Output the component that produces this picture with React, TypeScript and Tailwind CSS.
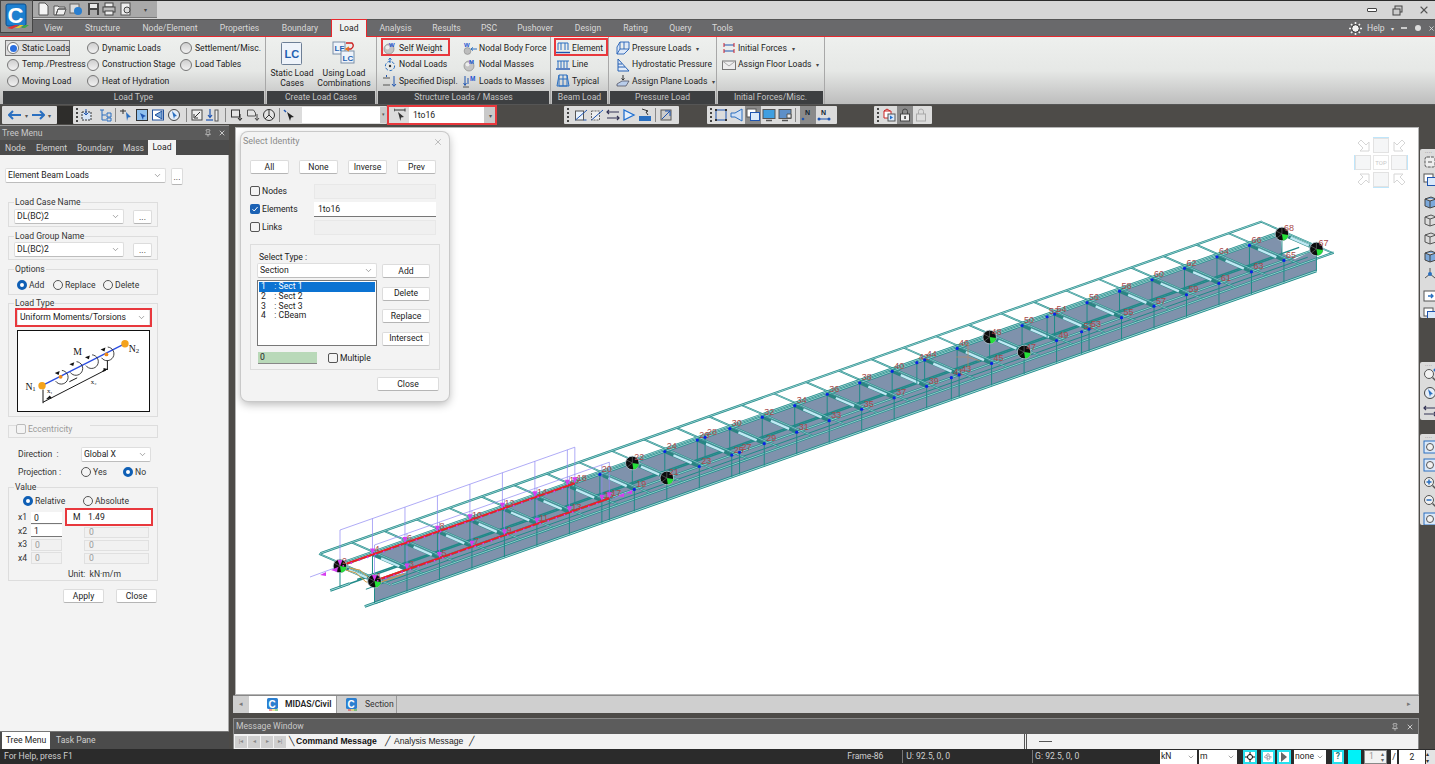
import type { ReactNode } from 'react';
import { ChevronDown, Pin, X } from 'lucide-react';

const TEAL = '#1f8a88';
const BLUE = '#2a6fc0';

// ---------- small widgets ----------

function Radio({ on = false }: { on?: boolean }) {
  return (
    <span
      className={
        on
          ? 'inline-block w-[10px] h-[10px] rounded-full border-[3px] border-[#0f5fb5] bg-white shrink-0'
          : 'inline-block w-[10px] h-[10px] rounded-full border border-[#555] bg-[#f4f4f4] shrink-0'
      }
    />
  );
}

function Check({ on = false, dim = false }: { on?: boolean; dim?: boolean }) {
  if (on) {
    return (
      <span className="inline-flex items-center justify-center w-[10px] h-[10px] rounded-[2px] bg-[#1c62b4] shrink-0">
        <svg width="8" height="8" viewBox="0 0 8 8">
          <path d="M1.5 4.2 3.2 6 6.6 2" fill="none" stroke="#fff" strokeWidth="1" />
        </svg>
      </span>
    );
  }
  return (
    <span
      className={
        dim
          ? 'inline-block w-[10px] h-[10px] rounded-[2px] border border-[#bbb] bg-[#f4f4f4] shrink-0'
          : 'inline-block w-[10px] h-[10px] rounded-[2px] border border-[#555] bg-[#f4f4f4] shrink-0'
      }
    />
  );
}

function Btn({ children, className }: { children: ReactNode; className: string }) {
  return (
    <div
      className={
        'flex items-center justify-center bg-white rounded-[2px] border border-[#dcdcdc] border-b-[#b5b5b5] text-[#222] ' +
        className
      }
    >
      {children}
    </div>
  );
}

function Select({ value, className }: { value: string; className: string }) {
  return (
    <div
      className={
        'flex items-center justify-between bg-white rounded-[2px] border border-[#dedede] border-b-[#bdbdbd] pl-[2px] pr-[3px] text-[#222] ' +
        className
      }
    >
      <span className="truncate">{value}</span>
      <ChevronDown size={9} color="#666" strokeWidth={1.5} />
    </div>
  );
}

function Group({
  legend,
  className,
  children,
}: {
  legend?: ReactNode;
  className: string;
  children?: ReactNode;
}) {
  return (
    <div className={'relative border border-[#dddddd] ' + className}>
      {legend && (
        <span className="absolute left-[5px] top-[-6px] px-px bg-[#f3f3f3] leading-[11px] text-[#333]">{legend}</span>
      )}
      {children}
    </div>
  );
}

// ---------- ribbon ----------

const Sphere = ({ letter }: { letter: string }) => (
  <svg width="14" height="14" viewBox="0 0 14 14" className="shrink-0">
    <circle cx="6" cy="8" r="5" fill="#c4c4c4" stroke="#8a8a8a" strokeWidth=".7" />
    <circle cx="4.5" cy="6.5" r="2" fill="#ececec" />
    <text x="6" y="6" fontSize="6" fontWeight="700" fill="#1f55d0" fontFamily="Liberation Sans">
      {letter}
    </text>
  </svg>
);

const ribbonIcons: Record<string, ReactNode> = {
  self: <Sphere letter="W" />,
  masses: <Sphere letter="M" />,
  nodal: (
    <svg width="14" height="14" viewBox="0 0 14 14" className="shrink-0">
      <circle cx="7" cy="8" r="4.6" fill="none" stroke={BLUE} strokeWidth="1" strokeDasharray="3 1.6" />
      <circle cx="7" cy="8" r="1.2" fill="#333" />
      <path d="M7 0v5M5.5 1.6 7 0l1.5 1.6" stroke={BLUE} strokeWidth="1" fill="none" />
    </svg>
  ),
  displ: (
    <svg width="14" height="14" viewBox="0 0 14 14" className="shrink-0">
      <path d="M0 4h7M0 11h7" stroke="#555" strokeWidth="1.2" />
      <path d="M3.5 1v2M11 2v10M9 10l2 2.4L13 10" stroke="#1f55b0" strokeWidth="1" fill="none" />
    </svg>
  ),
  body: (
    <svg width="14" height="14" viewBox="0 0 14 14" className="shrink-0">
      <circle cx="4.5" cy="10" r="3.4" fill="#bdbdbd" stroke="#888" strokeWidth=".6" />
      <text x="1" y="5.5" fontSize="6" fontWeight="700" fill="#1f55d0" fontFamily="Liberation Sans">
        W
      </text>
      <path d="M8 8h6M10 6.4 8 8l2 1.6" stroke={BLUE} strokeWidth="1" fill="none" />
    </svg>
  ),
  toMass: (
    <svg width="14" height="14" viewBox="0 0 14 14" className="shrink-0">
      <path d="M2 2v9M.6 9 2 11.5 3.4 9M5 4v6" stroke="#1f55b0" strokeWidth="1" fill="none" />
      <path d="M0 13h6" stroke="#555" />
      <text x="7" y="7" fontSize="6.5" fontWeight="700" fill="#1f55d0" fontFamily="Liberation Sans">
        M
      </text>
    </svg>
  ),
  element: (
    <svg width="14" height="14" viewBox="0 0 14 14" className="shrink-0">
      <path d="M2 9V2h10v7M5 2v7M9 2v7" stroke={BLUE} fill="none" />
      <path d="M0 11.5h14" stroke="#1f55b0" strokeWidth="1.4" />
    </svg>
  ),
  line: (
    <svg width="14" height="14" viewBox="0 0 14 14" className="shrink-0">
      <path d="M1 3h12M2 3v7M5 3v7M8 3v7M11 3v7" stroke={BLUE} fill="none" />
      <path d="M0 11h14" stroke="#1f55b0" strokeWidth="1.4" />
    </svg>
  ),
  typical: (
    <svg width="14" height="14" viewBox="0 0 14 14" className="shrink-0">
      <path d="M3 1h8v11H3zM1 12h12M3 5h8M7 1v11M3 1 1 12M11 1l2 11" stroke={BLUE} fill="none" />
    </svg>
  ),
  pressure: (
    <svg width="14" height="14" viewBox="0 0 14 14" className="shrink-0">
      <path d="M4 1h9v7L8 13H1V6zM4 1v7h9M4 8l-3 5M8 1v7" stroke="#2560b4" fill="#dde8f7" strokeWidth=".9" />
    </svg>
  ),
  hydro: (
    <svg width="14" height="14" viewBox="0 0 14 14" className="shrink-0">
      <path d="M2 1v12h11zM2 6h4M2 9h7" stroke="#2560b4" fill="#e3ecf8" />
    </svg>
  ),
  plane: (
    <svg width="14" height="14" viewBox="0 0 14 14" className="shrink-0">
      <path d="M1 10 6 7h7l-3 5H1z" fill="#b9cdea" stroke="#445" strokeWidth=".7" />
      <path d="M7 1v5M5.5 4.4 7 6l1.5-1.6" stroke="#333" fill="none" />
    </svg>
  ),
  forces: (
    <svg width="14" height="14" viewBox="0 0 14 14" className="shrink-0">
      <path d="M2 4h10M2 10h10" stroke="#1f55b0" strokeWidth="1.2" />
      <path d="M2 2v4M12 2v4M2 8v4M12 8v4" stroke="#c23" strokeWidth="1" />
    </svg>
  ),
  floor: (
    <svg width="14" height="14" viewBox="0 0 14 14" className="shrink-0">
      <rect x=".5" y="3" width="13" height="8.5" fill="#ededed" stroke="#777" />
      <path d="M.5 3 7 8l6.5-5" stroke="#aaa" fill="none" />
    </svg>
  ),
};

function RItem({
  icon,
  label,
  red,
  drop,
  className,
}: {
  icon: string;
  label: string;
  red?: boolean;
  drop?: boolean;
  className?: string;
}) {
  return (
    <div className={'relative flex items-center h-[16.5px] gap-[2px] text-[#222] whitespace-nowrap ' + (className ?? '')}>
      {red && <span className="absolute left-[-2px] right-[0px] top-[-2px] bottom-[1px] border-2 border-[#e8383d]" />}
      {ribbonIcons[icon]}
      <span>{label}</span>
      {drop && <span className="ml-[3px] text-[6px] text-[#444]">▾</span>}
    </div>
  );
}

function RRadio({ label, on }: { label: string; on?: boolean }) {
  return (
    <div className="relative flex items-center h-[16.5px] gap-[3px] text-[#222] whitespace-nowrap">
      {on && <span className="absolute left-[-2px] top-[0px] w-[65px] h-[16px] border border-[#777] bg-[#dedede]" />}
      <span
        className={
          on
            ? 'relative flex items-center justify-center w-[12px] h-[12px] rounded-full border border-[#777] bg-white shrink-0'
            : 'relative w-[12px] h-[12px] rounded-full border border-[#777] bg-gradient-to-b from-[#cfcfcf] to-[#f2f2f2] shrink-0'
        }
      >
        {on && <span className="w-[7px] h-[7px] rounded-full bg-[#2b6fe0]" />}
      </span>
      <span className="relative">{label}</span>
    </div>
  );
}

function Panel({ title, className, children }: { title: string; className: string; children: ReactNode }) {
  return (
    <div className={'flex flex-col shrink-0 border-r border-[#a8a8a8] ' + className}>
      <div className="h-[54px] pt-[3px]">{children}</div>
      <div className="h-[13px] mx-[1px] bg-[#3d3f41] text-[#c6c6c6] text-center leading-[13px]">{title}</div>
    </div>
  );
}

function LcIcon({ double }: { double?: boolean }) {
  if (double) {
    return (
      <svg width="24" height="24" viewBox="0 0 24 24">
        <rect x="1" y="2" width="12" height="12" fill="#eef3fa" stroke="#7b8fa8" />
        <rect x="9" y="11" width="13" height="12" fill="#eef3fa" stroke="#7b8fa8" />
        <text x="2.5" y="11" fontSize="8" fontWeight="700" fill="#1f5fb0" fontFamily="Liberation Sans">
          LF
        </text>
        <text x="10.5" y="20.5" fontSize="8" fontWeight="700" fill="#1f5fb0" fontFamily="Liberation Sans">
          LC
        </text>
        <path d="M14 3h6q3 3-1 6h-5" fill="none" stroke="#c22" strokeWidth="1.4" />
        <path d="M17 7l-3 2 3 2" fill="none" stroke="#e8791f" strokeWidth="1.4" />
      </svg>
    );
  }
  return (
    <svg width="22" height="24" viewBox="0 0 22 24">
      <rect x=".5" y=".5" width="20" height="22" rx="1" fill="#eef3fa" stroke="#6d7f96" />
      <text x="3.5" y="15.5" fontSize="11" fontWeight="700" fill="#1f5fb0" fontFamily="Liberation Sans">
        LC
      </text>
    </svg>
  );
}

// ---------- toolbar ----------

const Grip = () => (
  <span className="flex flex-col gap-[2px] w-[5px] shrink-0 items-center">
    <span className="w-[2px] h-[2px] bg-[#444]" />
    <span className="w-[2px] h-[2px] bg-[#444]" />
    <span className="w-[2px] h-[2px] bg-[#444]" />
    <span className="w-[2px] h-[2px] bg-[#444]" />
  </span>
);

const Sep = () => <span className="w-px h-[14px] bg-[#888] mx-[2px] shrink-0" />;

const toolIcons: Record<string, ReactNode> = {
  dash: (
    <>
      <rect x="2" y="4" width="9" height="8" fill="#d8e6f8" stroke="#333" strokeDasharray="2 1" />
      <path d="M6 1v6M4 5l2 2 2-2" stroke="#1f55b0" fill="none" />
    </>
  ),
  tree: <path d="M2 2h4M4 2v10h4M4 7h4M9 5h4v4H9zM9 10h4v3H9z" stroke={BLUE} fill="none" />,
  star: (
    <>
      <path d="M1 3h6M4 1v5" stroke="#333" />
      <path d="M7 4 12 9l-3 .5L8 13z" fill="#2a6fc0" />
    </>
  ),
  blue: (
    <>
      <rect x="1.5" y="1.5" width="11" height="11" fill="#8fc0ee" stroke="#333" />
      <path d="M5 5l6 3-2.5 1L8 12z" fill="#1f55b0" />
    </>
  ),
  sq: (
    <>
      <rect x="1.5" y="2" width="11" height="10" fill="#fff" stroke="#1f4f9a" />
      <path d="M11 3 4 7l7 4z" fill="#7ba8da" stroke="#1f4f9a" />
    </>
  ),
  circ: (
    <>
      <circle cx="7" cy="7" r="5.5" fill="#e6eef8" stroke="#444" />
      <path d="M5 3l5 5-2.3.4L7 11z" fill={BLUE} />
    </>
  ),
  arrowSq: (
    <>
      <rect x="2" y="2" width="10" height="10" fill="#eee" stroke="#444" />
      <path d="M10 4 5 9M4 6v4h4" stroke="#333" fill="none" />
    </>
  ),
  downBar: (
    <>
      <path d="M4 1v8M2 7l2 2.5L6 7" stroke="#1f55b0" fill="none" strokeWidth="1.2" />
      <path d="M0 12h7" stroke="#1f55b0" strokeWidth="1.2" />
      <rect x="9" y="2" width="3" height="11" fill="#eee" stroke="#555" />
    </>
  ),
  sqDown: (
    <>
      <rect x="1.5" y="2" width="8" height="7" fill="#e4e4e4" stroke="#333" />
      <path d="M10 6v6M8 10l2 2.5 2-2.5" stroke="#222" fill="none" />
    </>
  ),
  sqDown2: (
    <>
      <path d="M1.5 2h6l2 3v3h-8z" fill="#e4e4e4" stroke="#555" />
      <path d="M11 6v6M9 10l2 2.5 2-2.5" stroke="#444" fill="none" />
    </>
  ),
  wheel: (
    <>
      <circle cx="7" cy="7" r="5.5" fill="#e4e4e4" stroke="#333" />
      <path d="M7 7V1.5M7 7l4 4M7 7l-4 4" stroke="#333" />
    </>
  ),
  cursor: (
    <>
      <path d="M1 2l2 2" stroke="#1f55b0" strokeWidth="1.5" />
      <path d="M4 4l7 5-3 .5L7 13z" fill="#222" />
    </>
  ),
  frame1: (
    <>
      <rect x="1.5" y="3" width="8" height="9" fill="#eaf2fb" stroke="#555" />
      <path d="M1.5 12 13 2M9.5 12h3" stroke="#1f55b0" />
    </>
  ),
  frame2: (
    <>
      <rect x="1.5" y="3" width="8" height="9" fill="#eee" stroke="#666" strokeDasharray="2 1" />
      <path d="M1.5 12 13 2" stroke="#1f55b0" />
    </>
  ),
  lines: <path d="M1 4h12M1 10h12M3 2 1 4l2 2M11 8l2 2-2 2" stroke="#335" fill="none" strokeWidth="1.2" />,
  tri: <path d="M2 2v10l10-5z" fill="#e5f0fb" stroke="#1f6fd0" strokeWidth="1.3" />,
  nodesBlue: (
    <>
      <path d="M1 8h12v5H1z" fill="#2a6fc0" />
      <path d="M4 1l6 2-2 1 2 3" stroke="#333" fill="none" />
    </>
  ),
  swap: (
    <>
      <rect x="2" y="2" width="10" height="10" fill="#ccc" stroke="#555" />
      <path d="M3 11 11 3M6 3h5v5" stroke="#1f55b0" fill="none" />
    </>
  ),
  dots: (
    <>
      <rect x="2" y="2" width="10" height="10" fill="none" stroke="#1f55b0" />
      <path d="M1 1h2v2H1zM11 1h2v2h-2zM1 11h2v2H1zM11 11h2v2h-2z" fill="#333" />
    </>
  ),
  cone: <path d="M12 1v12L5 9H1V5h4z" fill="#cfe0f5" stroke={BLUE} />,
  win: (
    <>
      <rect x="1" y="1" width="9" height="8" fill="#fff" stroke="#555" />
      <rect x="4.5" y="4.5" width="9" height="8" fill="#dbe9f9" stroke="#1f55b0" />
    </>
  ),
  mon: (
    <>
      <rect x="1" y="1.5" width="12" height="9" fill="#3f9fe0" stroke="#555" />
      <path d="M4 12.5h6" stroke="#555" strokeWidth="1.5" />
    </>
  ),
  mon2: (
    <>
      <rect x="1" y="1.5" width="12" height="9" fill="#5d8fc8" stroke="#555" />
      <path d="M4 12.5h6" stroke="#555" strokeWidth="1.5" />
      <path d="M9 6h4v4H9z" fill="#eee" stroke="#555" />
    </>
  ),
  n1: (
    <>
      <text x="4" y="7" fontSize="7" fontWeight="700" fill="#123" fontFamily="Liberation Sans">
        N
      </text>
      <circle cx="2" cy="11" r="1.3" fill="#1f55b0" />
    </>
  ),
  n2: (
    <>
      <text x="4" y="7" fontSize="7" fontWeight="700" fill="#123" fontFamily="Liberation Sans">
        N
      </text>
      <path d="M2 11h10" stroke="#1f55b0" />
      <circle cx="2" cy="11" r="1.5" fill="#1f55b0" />
      <circle cx="12" cy="11" r="1.5" fill="#1f55b0" />
    </>
  ),
  pdf: (
    <>
      <path d="M2 3h7v7H2z" fill="#fff" stroke="#c22" />
      <path d="M2 3l3-2 3 2" stroke="#c22" fill="none" />
      <rect x="6" y="6" width="7" height="7" fill="#dbe9f9" stroke="#555" />
      <path d="M8 7.5 11 9.5 8 11.5z" fill="#1f6fd0" />
    </>
  ),
  lock: (
    <>
      <path d="M4.5 6V3.5a2.5 2.5 0 0 1 5 0V6" stroke="#444" fill="none" />
      <rect x="2.5" y="6" width="9" height="7" fill="#eee" stroke="#444" />
      <rect x="6.3" y="8" width="1.5" height="3" fill="#333" />
    </>
  ),
  lock2: (
    <>
      <path d="M4.5 6V3.5a2.5 2.5 0 0 1 5 0V6" stroke="#aaa" fill="none" />
      <rect x="2.5" y="6" width="9" height="7" fill="#ddd" stroke="#aaa" />
    </>
  ),
  mag: (
    <>
      <circle cx="6" cy="6" r="4.5" fill="#f2f2f2" stroke="#555" />
      <path d="M9.5 9.5 13 13" stroke="#555" strokeWidth="1.5" />
      <circle cx="12" cy="2" r="1.5" fill={BLUE} />
    </>
  ),
  magBox: (
    <>
      <rect x="1" y="1" width="12" height="12" fill="#dbe9f9" stroke={BLUE} />
      <circle cx="7" cy="7" r="3.5" fill="#f2f2f2" stroke="#555" />
    </>
  ),
  magPlus: (
    <>
      <circle cx="6" cy="6" r="4.5" fill="#f2f2f2" stroke="#555" />
      <path d="M3.5 6h5M6 3.5v5" stroke={BLUE} strokeWidth="1.5" />
      <path d="M9.5 9.5 13 13" stroke="#555" strokeWidth="1.5" />
    </>
  ),
  magMinus: (
    <>
      <circle cx="6" cy="6" r="4.5" fill="#f2f2f2" stroke="#555" />
      <path d="M3.5 6h5" stroke={BLUE} strokeWidth="1.5" />
      <path d="M9.5 9.5 13 13" stroke="#555" strokeWidth="1.5" />
    </>
  ),
  cube: <path d="M2 4l6-2 5 2v7l-6 2-5-2zM2 4l5 2 6-2M7 6v7" fill="#7ba8da" stroke="#444" />,
  cubeO: <path d="M2 4l6-2 5 2v7l-6 2-5-2zM2 4l5 2 6-2M7 6v7" fill="none" stroke="#555" />,
  axes: (
    <>
      <path d="M7 7V1M7 7l5 4M7 7l-5 4" stroke="#555" />
      <circle cx="7" cy="7" r="2" fill={BLUE} />
    </>
  ),
  shot: (
    <>
      <rect x="1" y="2" width="12" height="10" fill="#fff" stroke="#555" />
      <path d="M5 7h5M8 5l2 2-2 2" stroke={BLUE} strokeWidth="1.3" fill="none" />
    </>
  ),
  fit: (
    <>
      <rect x="2" y="2" width="10" height="10" rx="2" fill="#eee" stroke="#555" strokeDasharray="3 1" />
      <path d="M5 7h4" stroke="#555" />
    </>
  ),
};

function Tb({ name, active }: { name: string; active?: boolean }) {
  return (
    <span
      className={
        active
          ? 'flex items-center justify-center w-[16px] h-[18px] bg-[#8a8a8a] shrink-0'
          : 'flex items-center justify-center w-[16px] h-[18px] shrink-0'
      }
    >
      <svg width="14" height="14" viewBox="0 0 14 14">
        {toolIcons[name]}
      </svg>
    </span>
  );
}

function Toolbar() {
  return (
    <div className="flex h-[20px] items-center bg-[#4d4b48] shrink-0">
      <div className="flex items-center h-[18px] w-[55px] ml-[2px] bg-[#dcdcdc] rounded-[1px] pl-[6px] gap-[3px] text-[#555]">
        <svg width="14" height="10" viewBox="0 0 14 10">
          <path d="M1 5h12M5 1 1 5l4 4" stroke={BLUE} strokeWidth="2" fill="none" />
        </svg>
        <span className="text-[6px]">▾</span>
        <svg width="14" height="10" viewBox="0 0 14 10">
          <path d="M1 5h12M9 1l4 4-4 4" stroke={BLUE} strokeWidth="2" fill="none" />
        </svg>
        <span className="text-[6px]">▾</span>
      </div>
      <div className="w-[16px] h-[18px] bg-[#2e2d2b]" />
      <div className="flex items-center h-[18px] w-[314px] bg-[#dcdcdc] rounded-[1px] pl-[1px]">
        <Grip />
        <Tb name="dash" />
        <span className="w-[2px]" />
        <Tb name="tree" />
        <Sep />
        <Tb name="star" />
        <Tb name="blue" />
        <Tb name="sq" />
        <Tb name="circ" />
        <span className="w-[2px]" />
        <Sep />
        <Tb name="arrowSq" />
        <Tb name="downBar" />
        <span className="w-[2px]" />
        <Sep />
        <span className="w-[1px]" />
        <Tb name="sqDown" />
        <Tb name="sqDown2" />
        <Tb name="wheel" />
        <Sep />
        <Tb name="cursor" />
        <div className="w-[78px] h-[16px] bg-white ml-auto" />
        <div className="flex items-center justify-center w-[7px] h-[16px] bg-[#c9c9c9] text-[5px] text-[#555]">▾</div>
      </div>
      <div className="relative flex items-center h-[20px] w-[110px] bg-[#dcdcdc] pl-[7px]">
        <span className="absolute inset-0 border-2 border-[#e8383d]" />
        <svg width="12" height="14" viewBox="0 0 12 14">
          <path d="M0 2h11M0 .5v3M11 .5v3" stroke="#333" />
          <path d="M4 4l6 5-3 .4-.6 3.6z" fill="#333" />
        </svg>
        <div className="flex items-center ml-[3px] pl-[4px] w-[75px] h-[16px] bg-white text-[#222]">1to16</div>
        <div className="flex items-center justify-center w-[12px] h-[16px] bg-[#c9c9c9] text-[6px] text-[#555]">▾</div>
      </div>
      <div className="flex items-center h-[18px] w-[115px] ml-[67px] bg-[#dcdcdc] rounded-[1px] pl-[1px]">
        <Grip />
        <span className="w-[3px]" />
        <Tb name="frame1" />
        <Tb name="frame2" />
        <Tb name="lines" />
        <Tb name="tri" />
        <Tb name="nodesBlue" />
        <Sep />
        <Tb name="swap" />
      </div>
      <div className="flex items-center h-[18px] w-[130px] ml-[28px] bg-[#dcdcdc] rounded-[1px] pl-[1px]">
        <Grip />
        <Tb name="dots" />
        <Tb name="cone" />
        <Tb name="win" active />
        <Tb name="mon" />
        <Tb name="mon2" />
        <Sep />
        <span className="w-[2px]" />
        <Tb name="n1" active />
        <Tb name="n2" />
      </div>
      <div className="flex items-center h-[18px] w-[58px] ml-[37px] bg-[#dcdcdc] rounded-[1px] pl-[1px]">
        <Grip />
        <span className="w-[1px]" />
        <Tb name="pdf" />
        <Tb name="lock" active />
        <Tb name="lock2" />
      </div>
    </div>
  );
}

// ---------- top ----------

const qat: ReactNode[] = [
  <path key="n" d="M3 1h6l3 3v9H3z" fill="#f4f4f4" stroke="#555" />,
  <path key="o" d="M1 4h4l1 1h6v2H5l-2 6H1zM3 13l2-6h8l-2 6z" fill="#eee" stroke="#555" />,
  <g key="i">
    <rect x="1" y="2" width="9" height="9" fill="#ddd" stroke="#666" />
    <circle cx="9" cy="9" r="4" fill="#2a7fd0" />
  </g>,
  <g key="s">
    <rect x="2" y="1" width="11" height="12" fill="#444" />
    <rect x="4" y="2" width="7" height="4" fill="#e8e8e8" />
    <rect x="4" y="8" width="7" height="5" fill="#aaa" />
  </g>,
  <g key="p">
    <rect x="3" y="1" width="8" height="4" fill="#eee" stroke="#444" />
    <rect x="1" y="5" width="12" height="5" fill="#bbb" stroke="#444" />
    <rect x="3" y="9" width="8" height="4" fill="#eee" stroke="#444" />
  </g>,
  <g key="v">
    <rect x="2" y="1" width="9" height="12" fill="#eee" stroke="#555" />
    <circle cx="8" cy="8" r="3" fill="#ddd" stroke="#444" />
  </g>,
];

function TitleBar() {
  return (
    <div className="flex h-[19px] shrink-0 bg-[#d6d6d6] border-t border-[#2a2a2a]">
      <div className="flex items-center w-[157px] h-[17px] bg-[#a9a9a9] pl-[36px] gap-[2.5px] border-b border-[#777]">
        {qat.map((q, i) => (
          <svg key={i} width="14" height="14" viewBox="0 0 14 14">
            {q}
          </svg>
        ))}
        <span className="ml-[9px] text-[6px] text-[#444]">▾</span>
      </div>
      <div className="flex-1" />
      <div className="flex items-center pr-[5px] gap-[15px]">
        <span className="w-[10px] h-[4px] rounded-[1px] border border-[#444] bg-white" />
        <svg width="11" height="11" viewBox="0 0 11 11">
          <rect x="3" y="1" width="7" height="6" fill="#ccc" stroke="#444" />
          <rect x="1" y="4" width="7" height="6" fill="#ccc" stroke="#444" />
        </svg>
        <X size={12} color="#555" strokeWidth={2.2} />
      </div>
    </div>
  );
}

const tabs = [
  { t: 'View', w: 'w-[43px]' },
  { t: 'Structure', w: 'w-[55px]' },
  { t: 'Node/Element', w: 'w-[80px]' },
  { t: 'Properties', w: 'w-[59px]' },
  { t: 'Boundary', w: 'w-[62px]' },
  { t: 'Load', w: '' },
  { t: 'Analysis', w: 'w-[57px]' },
  { t: 'Results', w: 'w-[45px]' },
  { t: 'PSC', w: 'w-[40px]' },
  { t: 'Pushover', w: 'w-[52px]' },
  { t: 'Design', w: 'w-[54px]' },
  { t: 'Rating', w: 'w-[41px]' },
  { t: 'Query', w: 'w-[49px]' },
  { t: 'Tools', w: 'w-[35px]' },
];

function TabBar() {
  return (
    <div className="flex items-end h-[17px] shrink-0 bg-[#69696b] pl-[32px] text-[#d9d9d9] border-t border-[#555] leading-[17px]">
      {tabs.map(({ t, w }) =>
        t === 'Load' ? (
          <div
            key={t}
            className="relative z-10 w-[36px] h-[18px] -mb-[1px] bg-[#f0f1f0] border border-b-0 border-[#e8282d] text-center text-[#222]"
          >
            {t}
          </div>
        ) : (
          <div key={t} className={'h-[16px] text-center ' + w}>
            {t}
          </div>
        ),
      )}
      <div className="flex-1" />
      <div className="flex items-center h-[16px] text-[#ddd]">
        <svg width="13" height="13" viewBox="0 0 13 13">
          <path d="M6.500 0v2M6.500 11v2M0 6.500h2M11 6.500h2M2 2l1.500 1.500M9.500 9.500 11 11M2 11l1.500-1.500M9.500 3.500 11 2" stroke="#eee" strokeWidth="1.600" />
          <circle cx="6.500" cy="6.500" r="3.800" fill="#f2f2f2" stroke="#333" />
        </svg>
        <span className="ml-[5px] w-[18px]">Help</span>
        <span className="ml-[6px] text-[6px]">▾</span>
        <span className="ml-[7px] w-[6px] h-[2px] bg-[#ccc]" />
        <span className="ml-[8px] w-[6px] h-[6px] rounded-full bg-[#ddd]" />
        <span className="ml-[7px]">
          <X size={7} color="#ddd" strokeWidth={3} />
        </span>
      </div>
    </div>
  );
}

function Ribbon() {
  return (
    <div className="flex h-[69px] shrink-0 border-t border-[#e8282d] bg-gradient-to-b from-[#eef0ee] via-[#e6e8e6] to-[#bdbdbd] pl-[2px] border-b border-b-[#555]">
      <Panel title="Load Type" className="w-[264px]">
        <div className="grid grid-cols-[80px_93px_88px] pl-[5px]">
          <RRadio label="Static Loads" on />
          <RRadio label="Dynamic Loads" />
          <RRadio label="Settlement/Misc." />
          <RRadio label="Temp./Prestress" />
          <RRadio label="Construction Stage" />
          <RRadio label="Load Tables" />
          <RRadio label="Moving Load" />
          <RRadio label="Heat of Hydration" />
        </div>
      </Panel>
      <Panel title="Create Load Cases" className="w-[111px]">
        <div className="flex pl-[1px] text-center leading-[10px] text-[#222]">
          <div className="flex flex-col items-center w-[50px] pt-[2px]">
            <LcIcon />
            <div className="mt-[2px]">
              Static Load
              <br />
              Cases
            </div>
          </div>
          <div className="flex flex-col items-center w-[54px]">
            <LcIcon double />
            <div className="mt-[4px] whitespace-nowrap">
              Using Load
              <br />
              Combinations
            </div>
          </div>
        </div>
      </Panel>
      <Panel title="Structure Loads / Masses" className="w-[174px]">
        <div className="grid grid-cols-[80px_88px] pl-[6px]">
          <RItem icon="self" label="Self Weight" red className="w-[67px]" />
          <RItem icon="body" label="Nodal Body Force" />
          <RItem icon="nodal" label="Nodal Loads" />
          <RItem icon="masses" label="Nodal Masses" />
          <RItem icon="displ" label="Specified Displ." />
          <RItem icon="toMass" label="Loads to Masses" />
        </div>
      </Panel>
      <Panel title="Beam Load" className="w-[58px]">
        <div className="pl-[5px]">
          <RItem icon="element" label="Element" red />
          <RItem icon="line" label="Line" />
          <RItem icon="typical" label="Typical" />
        </div>
      </Panel>
      <Panel title="Pressure Load" className="w-[108px]">
        <div className="pl-[7px]">
          <RItem icon="pressure" label="Pressure Loads" drop />
          <RItem icon="hydro" label="Hydrostatic Pressure" />
          <RItem icon="plane" label="Assign Plane Loads" drop />
        </div>
      </Panel>
      <Panel title="Initial Forces/Misc." className="w-[108px]">
        <div className="pl-[5px]">
          <RItem icon="forces" label="Initial Forces" drop />
          <RItem icon="floor" label="Assign Floor Loads" drop />
        </div>
      </Panel>
    </div>
  );
}

// ---------- tree menu ----------

function LoadDiagram() {
  const arcs = [
    [43, 47],
    [58, 38],
    [74, 31],
    [90, 23],
  ];
  return (
    <svg width="133" height="82" viewBox="0 0 133 82" className="bg-white border border-[#111]">
      <path d="M24 56 109 13" stroke="#2a4ce0" strokeWidth="1.3" />
      <path d="M25 73 91 39M25 60v14M91 30v10M60 48l-8 4M86 41l5-2" stroke="#111" fill="none" />
      <path d="M28 70l6-1-2-3zM87 42l4-3-4-1z" fill="#111" />
      {arcs.map(([x, y]) => (
        <g key={x}>
          <path
            d={`M${x - 6} ${y + 3}a7 7 0 1 0 9 -9`}
            transform={`rotate(-15 ${x} ${y})`}
            fill="none"
            stroke="#222"
            strokeWidth=".8"
          />
          <path d={`M${x - 6} ${y - 4}l5 -2 -1 4z`} fill="#111" />
        </g>
      ))}
      <circle cx="43" cy="47" r="2" fill="#f08a1a" />
      <circle cx="90" cy="24" r="2" fill="#f08a1a" />
      <circle cx="24" cy="56" r="3.8" fill="#f4a21c" />
      <circle cx="109" cy="13" r="3.8" fill="#f4a21c" />
      <g fontFamily="Liberation Serif" fill="#111">
        <text x="7" y="60" fontSize="10">
          N
        </text>
        <text x="14" y="61" fontSize="7">
          1
        </text>
        <text x="113" y="22" fontSize="10">
          N
        </text>
        <text x="120" y="23" fontSize="7">
          2
        </text>
        <text x="56" y="25" fontSize="10">
          M
        </text>
        <text x="29" y="64" fontSize="7">
          x₁
        </text>
        <text x="74" y="54" fontSize="7">
          x₂
        </text>
      </g>
    </svg>
  );
}

function ValueRow({ label, value, enabled }: { label: string; value: string; enabled?: boolean }) {
  return (
    <div className="flex items-center h-[13.5px]">
      <span className="w-[22px] pl-[9px] text-[#333]">{label}</span>
      <div
        className={
          enabled
            ? 'w-[31px] h-[12px] bg-white border-b border-[#777] pl-[3px] leading-[12px] text-[#222]'
            : 'w-[31px] h-[12px] bg-[#f1f1f1] border border-[#e0e0e0] pl-[3px] leading-[10px] text-[#999]'
        }
      >
        {value}
      </div>
    </div>
  );
}

function TreeMenu() {
  return (
    <div className="flex flex-col w-[229px] shrink-0 h-full bg-[#4b4b4b]">
      <div className="flex items-center justify-between h-[15px] bg-[#5b5b5b] border-t border-[#999] px-[2px] text-[#c9c9c9]">
        <span>Tree Menu</span>
        <span className="flex items-center gap-[6px] pr-[1px]">
          <Pin size={8} color="#ddd" />
          <X size={8} color="#ddd" strokeWidth={2.5} />
        </span>
      </div>
      <div className="flex items-end h-[15px] pl-[5px] text-[#d2d2d2] leading-[15px]">
        <span className="h-[14px] w-[31px]">Node</span>
        <span className="h-[14px] w-[41px]">Element</span>
        <span className="h-[14px] w-[46px]">Boundary</span>
        <span className="h-[14px] w-[25px]">Mass</span>
        <span className="h-[15px] w-[28px] bg-[#f3f3f3] text-[#222] text-center">Load</span>
      </div>
      <div className="flex-1 flex flex-col bg-[#f3f3f3] border-r border-[#aaa]">
        <div className="flex mt-[13px] ml-[5px] items-start">
          <Select value="Element Beam Loads" className="w-[161px] h-[15px]" />
          <Btn className="ml-[5px] w-[12px] h-[17px] leading-[10px]">...</Btn>
        </div>
        <Group legend="Load Case Name" className="mt-[17px] ml-[8px] w-[150px] h-[25px]">
          <div className="flex mt-[6px] ml-[5px]">
            <Select value="DL(BC)2" className="w-[110px] h-[15px]" />
            <Btn className="ml-[9px] mt-[1px] w-[19px] h-[14px]">...</Btn>
          </div>
        </Group>
        <Group legend="Load Group Name" className="mt-[9px] ml-[8px] w-[150px] h-[24px]">
          <div className="flex mt-[5px] ml-[5px]">
            <Select value="DL(BC)2" className="w-[110px] h-[15px]" />
            <Btn className="ml-[9px] mt-[1px] w-[19px] h-[14px]">...</Btn>
          </div>
        </Group>
        <Group legend="Options" className="mt-[9px] ml-[8px] w-[150px] h-[26px]">
          <div className="flex items-center gap-[2px] mt-[9px] ml-[8px] text-[#333]">
            <Radio on />
            <span className="w-[22px]">Add</span>
            <Radio />
            <span className="w-[36px]">Replace</span>
            <Radio />
            <span>Delete</span>
          </div>
        </Group>
        <Group legend="Load Type" className="mt-[8px] ml-[8px] w-[150px] h-[114px]">
          <div className="relative flex flex-col ml-[8px] mt-[5px]">
            <div className="relative w-[133px]">
              <span className="absolute z-10 left-[-2px] right-[-2px] top-[-1px] bottom-[-1px] border-2 border-[#e8383d]" />
              <Select value="Uniform Moments/Torsions" className="w-[133px] h-[17px]" />
            </div>
            <div className="mt-[4px]">
              <LoadDiagram />
            </div>
          </div>
        </Group>
        <Group className="mt-[8px] ml-[8px] w-[150px] h-[13px]">
          <div className="absolute left-[7px] top-[-3px] flex items-center gap-[2px] bg-[#f3f3f3] pr-[18px] leading-[12px] text-[#9a9a9a]">
            <Check dim />
            <span>Eccentricity</span>
          </div>
        </Group>
        <div className="flex items-center mt-[9px] ml-[18px] text-[#333]">
          <span className="w-[63px]">Direction&nbsp;&nbsp;:</span>
          <Select value="Global X" className="w-[70px] h-[15px]" />
        </div>
        <div className="flex items-center mt-[2px] ml-[18px] h-[16px] text-[#333]">
          <span className="w-[63px]">Projection :</span>
          <Radio />
          <span className="ml-[2px] w-[30px]">Yes</span>
          <Radio on />
          <span className="ml-[2px]">No</span>
        </div>
        <Group legend="Value" className="mt-[7px] ml-[8px] w-[150px] h-[94px]">
          <div className="flex items-center gap-[2px] mt-[7px] ml-[14px] h-[12px] text-[#333]">
            <Radio on />
            <span className="w-[46px]">Relative</span>
            <Radio />
            <span>Absolute</span>
          </div>
          <div className="flex mt-[1px]">
            <div className="flex flex-col w-[53px] pt-[3px]">
              <ValueRow label="x1" value="0" enabled />
              <ValueRow label="x2" value="1" enabled />
              <ValueRow label="x3" value="0" />
              <ValueRow label="x4" value="0" />
            </div>
            <div className="flex flex-col ml-[3px]">
              <div className="relative flex items-center w-[88px] h-[18px] pl-[8px] bg-white text-[#222]">
                <span className="absolute inset-0 border-2 border-[#e8383d]" />
                <span className="w-[15px]">M</span>
                <span>1.49</span>
              </div>
              <div className="flex flex-col gap-[2px] pt-[1px]">
                {['0', '0', '0'].map((v, i) => (
                  <div
                    key={i}
                    className="ml-[19px] w-[65px] h-[11px] bg-[#f1f1f1] border border-[#e0e0e0] pl-[4px] leading-[9px] text-[#999]"
                  >
                    {v}
                  </div>
                ))}
              </div>
            </div>
          </div>
          <div className="mt-[3px] ml-[59px] text-[#333]">Unit:&nbsp; kN·m/m</div>
        </Group>
        <div className="flex mt-[8px] ml-[63px] gap-[12px]">
          <Btn className="w-[41px] h-[14px]">Apply</Btn>
          <Btn className="w-[41px] h-[14px]">Close</Btn>
        </div>
      </div>
      <div className="flex items-end h-[18px] pl-[2px] text-[#d0d0d0] border-t border-[#777]">
        <div className="w-[48px] h-[17px] bg-white text-[#222] text-center leading-[17px]">Tree Menu</div>
        <div className="ml-[6px] h-[17px] leading-[17px]">Task Pane</div>
      </div>
    </div>
  );
}

// ---------- bridge model ----------

const P = (s: number, t: number, h = 0): [number, number] => [340 + 32.48 * s + 34.5 * t, 566 - 11.45 * s + 15 * t + h];
const cols = [0, 1, 2, 3, 4, 5, 6, 7, 7.23, 8, 9, 10, 11, 11.24, 12, 13, 14, 15, 16, 17, 17.76, 18, 19, 20, 21, 21.77, 22, 23, 24, 25, 26, 27, 28, 29];
const bays = cols.filter((c) => Number.isInteger(c));
const LAST_SEL = 7.23;

function Ln({ a, b, c = TEAL, w = 1 }: { a: [number, number]; b: [number, number]; c?: string; w?: number }) {
  return <line x1={a[0]} y1={a[1]} x2={b[0]} y2={b[1]} stroke={c} strokeWidth={w} />;
}

function Dbl({ a, b, w = 2.2 }: { a: [number, number]; b: [number, number]; w?: number }) {
  return (
    <>
      <Ln a={a} b={b} w={w} />
      <Ln a={a} b={b} w={w * 0.3} c="#cdeeee" />
    </>
  );
}

function Support({ x, y }: { x: number; y: number }) {
  return (
    <g>
      <circle cx={x} cy={y} r="6.8" fill="#0c0c0c" stroke="#b9cfdc" strokeWidth=".8" />
      <path d={`M${x} ${y}L${x + 6.5} ${y + 1}A6.5 6.5 0 0 1 ${x + 1} ${y + 6.5}Z`} fill="#26e03a" />
      <path d={`M${x} ${y}V${y - 6.5}M${x} ${y}L${x - 6} ${y - 3}M${x} ${y}L${x - 5} ${y + 4}`} stroke="#888" strokeWidth=".5" />
    </g>
  );
}

function Model() {
  const gray = [
    P(0, 0),
    P(28.95, 0),
    [1282, 253],
    [1295, 259],
    P(29, 1),
    P(29, 1, 22),
    P(0, 1, 22),
    P(0, 1),
    [407, 572],
    P(1, 0),
  ]
    .map((p) => p.join(','))
    .join(' ');
  return (
    <svg className="absolute inset-0" width="1183" height="567" viewBox="236 128 1183 567">
      <polygon points={gray} fill="#7f92ac" />
      {/* lower flanges and stringers */}
      <Ln a={P(0, 0, 21)} b={P(29, 0, 21)} w={1.4} />
      <Ln a={P(0, 0.5, 6)} b={P(29, 0.5, 6)} w={1.4} />
      <Ln a={P(0, 0.75, 12)} b={P(29, 0.75, 12)} w={1} />
      {bays.map((s) => (
        <Dbl key={'d' + s} a={P(s + 0.12, -0.72)} b={P(s + 0.12, 1.36)} w={1.8} />
      ))}
      {[-0.72, -0.1, 1.36].map((t) => (
        <Dbl key={'l' + t} a={P(0.16, t)} b={P(29.15, t)} />
      ))}
      <Dbl a={P(0.16, 0)} b={P(29.15, 0)} />
      <Dbl a={P(0.16, 1)} b={P(29.15, 1)} />
      <Dbl a={P(0, 1, 22)} b={P(29, 1, 22)} w={2.6} />
      <Dbl a={P(-0.3, 1, 22)} b={P(0.3, 1, 22)} w={2.6} />
      <Dbl a={P(-0.3, 0, 21)} b={P(0.3, 0, 21)} w={2.6} />
      {/* cross beams */}
      {bays.map((s) => (
        <g key={'c' + s}>
          <Ln a={P(s, 0)} b={P(s, 1)} w={3.2} c="#2a8583" />
          <Ln a={P(s, 0.25)} b={P(s, 0.78)} w={2.4} c="#bfe9f4" />
        </g>
      ))}
      {/* webs */}
      {cols.map((s) => (
        <g key={'w' + s}>
          <Ln a={P(s, 0)} b={P(s, 0, 21)} w={1} />
          <Ln a={P(s, 1)} b={P(s, 1, 22)} w={1} />
        </g>
      ))}
      {/* near section */}
      <polyline points="346,570 356,573 366,582 381,582 404,574" fill="none" stroke="#d39a45" strokeWidth="1" />
      <polyline points="349,568 360,570 369,578 382,578 401,571" fill="none" stroke="#d39a45" strokeWidth="1" />
      {/* load diagram */}
      <g stroke="#8c86f2" strokeWidth=".7" fill="none">
        {cols
          .filter((s) => s <= LAST_SEL)
          .flatMap((s) =>
            [0, 1].map((t) => {
              const a = P(s, t);
              return <line key={s + '-' + t} x1={a[0]} y1={a[1]} x2={a[0]} y2={a[1] - 36} />;
            }),
          )}
        <line x1={P(0, 0)[0]} y1={P(0, 0)[1] - 36} x2={P(LAST_SEL, 0)[0]} y2={P(LAST_SEL, 0)[1] - 36} />
        <line x1={P(0, 1)[0]} y1={P(0, 1)[1] - 36} x2={P(LAST_SEL, 1)[0]} y2={P(LAST_SEL, 1)[1] - 36} />
        <line x1="310" y1="577" x2="340" y2="566" />
        <line x1="615" y1="498" x2="634" y2="490" />
      </g>
      <Ln a={P(0, 0)} b={P(LAST_SEL, 0)} c="#ee1c25" w={2} />
      <Ln a={P(0, 1)} b={P(LAST_SEL, 1)} c="#ee1c25" w={2} />
      {cols.map((s, i) =>
        [0, 1].map((t) => {
          const [x, y] = P(s, t);
          const label = i * 2 + (t === 0 ? 2 : 1);
          const fixed = s === 0 || s === 9 || s === 20 || s === 29;
          const sel = s <= LAST_SEL;
          return (
            <g key={s + 'n' + t}>
              {fixed && <Support x={x} y={y} />}
              {sel ? (
                <path d={`M${x - 2.5} ${y - 6}h5L${x} ${y}Z`} fill="#d63cf0" />
              ) : fixed ? null : (
                <circle cx={x} cy={y} r="1.6" fill="#0a22e6" />
              )}
              <text x={x + 2} y={y - 2.5} fontSize="9" fill="#a8494a" fontFamily="Liberation Sans">
                {label}
              </text>
            </g>
          );
        }),
      )}
      {Array.from({ length: 28 }).flatMap((_, i) =>
        [0, 1].map((t) => {
          const [x, y] = P(i / 4 + 0.1, t);
          return <circle key={i + 'm' + t} cx={x} cy={y + 1} r=".9" fill="#d63cf0" />;
        }),
      )}
      <path d="M320 575l6-3 0 4zM331 570l7-3-1 5zM618 496l6-3 0 4zM626 493l6-3 0 4z" fill="#d63cf0" />
      {/* ucs */}
      <path d="M968 344v25M956 357h12l12 4" stroke="#b58a6a" strokeWidth=".7" fill="none" />
    </svg>
  );
}

function NavCube() {
  const tile = 'w-[16px] h-[15px] bg-[#f5f6f7] border border-[#e2e2e2]';
  const corner = 'flex items-center justify-center w-[16px] h-[15px]';
  const Arrow = ({ flip = '' }: { flip?: string }) => (
    <svg width="13" height="13" viewBox="0 0 13 13">
      <polygon points="12,12 3,12 6,9 1,4 4,1 9,6 12,3" transform={flip} fill="none" stroke="#d6d6d6" strokeWidth="1" />
    </svg>
  );
  return (
    <div className="absolute right-[11px] top-[10px] grid grid-cols-[16px_16px_16px] gap-[2px]">
      <div className={corner}>
        <Arrow />
      </div>
      <div className={tile + ' shadow-[0_-1px_0_#bfe6fb]'} />
      <div className={corner}>
        <Arrow flip="translate(13 0) scale(-1 1)" />
      </div>
      <div className={tile + ' shadow-[-1px_0_0_#bfe6fb]'} />
      <div className="flex items-center justify-center w-[16px] h-[15px] border border-[#e8e8e8] text-[6px] text-[#c8c8c8]">TOP</div>
      <div className={tile + ' shadow-[1px_0_0_#bfe6fb]'} />
      <div className={corner}>
        <Arrow flip="translate(0 13) scale(1 -1)" />
      </div>
      <div className={tile + ' shadow-[0_1px_0_#bfe6fb]'} />
      <div className={corner}>
        <Arrow flip="translate(13 13) scale(-1 -1)" />
      </div>
    </div>
  );
}

// ---------- dialog ----------

function SelectIdentity() {
  const dbtn = 'w-[39px] h-[14px]';
  const rbtn = 'w-[48px] h-[14px]';
  const field = 'w-[122px] h-[15px] bg-[#f0f0f0] border border-[#e8e8e8]';
  return (
    <div className="absolute left-[5px] top-[4px] z-20 w-[208px] h-[269px] rounded-[7px] bg-[#f3f3f3] text-[#222] shadow-[0_0_0_1px_#c9c9c9,0_3px_10px_rgba(0,0,0,.3)]">
      <div className="flex items-center justify-between h-[19px] pl-[2px] pr-[6px] text-[#8b8b8b] text-[9px]">
        <span>Select Identity</span>
        <X size={10} color="#8b8b8b" strokeWidth={1.3} />
      </div>
      <div className="flex gap-[10px] mt-[9px] ml-[9px]">
        <Btn className={dbtn}>All</Btn>
        <Btn className={dbtn}>None</Btn>
        <Btn className={dbtn}>Inverse</Btn>
        <Btn className={dbtn}>Prev</Btn>
      </div>
      <div className="grid grid-cols-[64px_122px] gap-y-[3px] mt-[10px] ml-[9px] items-center">
        <div className="flex items-center gap-[2px]">
          <Check />
          Nodes
        </div>
        <div className={field} />
        <div className="flex items-center gap-[2px]">
          <Check on />
          Elements
        </div>
        <div className="w-[122px] h-[15px] bg-white border-b border-[#777] pl-[4px] leading-[14px]">1to16</div>
        <div className="flex items-center gap-[2px]">
          <Check />
          Links
        </div>
        <div className={field} />
      </div>
      <div className="mt-[9px] ml-[9px] w-[190px] h-[126px] border border-[#dddddd] pl-[6px] pt-[6px]">
        <div className="h-[12px] pl-[2px] leading-[12px]">Select Type :</div>
        <div className="flex gap-[5px]">
          <div className="w-[120px]">
            <Select value="Section" className="w-[120px] h-[15px]" />
            <div className="mt-[2px] w-[120px] h-[66px] bg-white border border-[#777] p-px leading-[9.7px]">
              <div className="h-[10px] bg-[#0c73d2] text-white pl-[2px] whitespace-pre">1    : Sect 1</div>
              <div className="pl-[2px] whitespace-pre">2    : Sect 2</div>
              <div className="pl-[2px] whitespace-pre">3    : Sect 3</div>
              <div className="pl-[2px] whitespace-pre">4    : CBeam</div>
            </div>
          </div>
          <div className="flex flex-col pt-[1px] gap-[8.5px]">
            <Btn className={rbtn}>Add</Btn>
            <Btn className={rbtn}>Delete</Btn>
            <Btn className={rbtn}>Replace</Btn>
            <Btn className={rbtn}>Intersect</Btn>
          </div>
        </div>
        <div className="flex items-center mt-[6px]">
          <div className="ml-[1px] w-[59px] h-[12px] bg-[#b9d9b9] border-b border-[#888] pl-[2px] leading-[11px]">0</div>
          <span className="ml-[11px] flex">
            <Check />
          </span>
          <span className="ml-[2px]">Multiple</span>
        </div>
      </div>
      <Btn className="mt-[7px] ml-[136px] w-[62px] h-[14px]">Close</Btn>
    </div>
  );
}

// ---------- bottom ----------

function CLogo() {
  return (
    <svg width="12" height="13" viewBox="0 0 12 13" className="shrink-0">
      <rect x="0" y="0" width="11" height="11" rx="1.5" fill="#2b7fd0" />
      <text x="1.5" y="9.5" fontSize="10" fontWeight="700" fill="#fff" fontFamily="Liberation Sans">
        C
      </text>
      <path d="M2 12h3" stroke="#d33" />
      <path d="M5 12h3" stroke="#dc3" />
      <path d="M8 12h3" stroke="#3a3" />
    </svg>
  );
}

function ViewTabs() {
  return (
    <div className="flex items-end h-[18px] shrink-0 bg-[#cfcfcf] border-t border-[#888]">
      <span className="ml-[6px] mb-[4px] text-[7px] text-[#777]">◂</span>
      <div className="flex items-center gap-[6px] ml-[6px] pl-[18px] w-[88px] h-[17px] bg-white border-r border-[#999] font-semibold text-[#222]">
        <CLogo />
        MIDAS/Civil
      </div>
      <div className="flex items-center gap-[7px] pl-[9px] w-[60px] h-[17px] border-r border-[#999] text-[#333]">
        <CLogo />
        Section
      </div>
      <div className="flex-1" />
      <span className="mr-[8px] mb-[4px] text-[7px] text-[#777]">▸</span>
    </div>
  );
}

function MessageWindow() {
  return (
    <div className="flex flex-col h-[31px] mt-[5px] shrink-0 border border-[#8a8a8a] border-b-0">
      <div className="flex items-center justify-between h-[15px] bg-[#5c5c5c] pl-[2px] pr-[4px] text-[#c9c9c9]">
        <span>Message Window</span>
        <span className="flex items-center gap-[7px]">
          <Pin size={8} color="#ddd" />
          <X size={8} color="#ddd" strokeWidth={2.5} />
        </span>
      </div>
      <div className="flex items-center flex-1 bg-[#f2f2f2] text-[8.6px] font-['Liberation_Sans',sans-serif] text-[#222]">
        <div className="flex ml-[1px] gap-px">
          {['|◂', '◂', '▸', '▸|'].map((g) => (
            <span key={g} className="flex items-center justify-center w-[12px] h-[12px] bg-[#cfcfcf] text-[6px] text-[#888]">
              {g}
            </span>
          ))}
        </div>
        <span className="w-[10px] text-center">╲</span>
        <span className="w-[86px] font-bold text-[#111]">Command Message</span>
        <span className="w-[10px] text-center">╱</span>
        <span className="ml-[2px] w-[72px]">Analysis Message</span>
        <span className="w-[10px] text-center">╱</span>
        <div className="flex-1" />
        <span className="w-[3px] h-[15px] border-x border-[#555] mr-[12px]" />
        <span className="w-[13px] h-px bg-[#555] mr-[366px]" />
      </div>
    </div>
  );
}

function StatusBar() {
  const sel = 'flex items-center justify-between h-[14px] bg-white text-[#222] pl-[1px] pr-[2px] shrink-0';
  const cy = 'flex items-center justify-center h-[14px] bg-white border-2 border-[#27e0ee] shrink-0';
  return (
    <div className="flex items-center h-[15px] shrink-0 bg-[#2b2b2b] text-[#cfcfcf] whitespace-nowrap">
      <span className="ml-[4px] w-[844px]">For Help, press F1</span>
      <span className="w-[55px]">Frame-86</span>
      <span className="w-[130px] pl-[3px] border-l border-[#777]">U: 92.5, 0, 0</span>
      <span className="w-[128px] pl-[2px] border-l border-[#777]">G: 92.5, 0, 0</span>
      <div className={sel + ' w-[37px]'}>
        kN <ChevronDown size={8} color="#777" />
      </div>
      <div className={sel + ' w-[38px] ml-[2px]'}>
        m <ChevronDown size={8} color="#777" />
      </div>
      <div className={cy + ' w-[14px] ml-[6px]'}>
        <svg width="10" height="10" viewBox="0 0 10 10">
          <circle cx="5" cy="5" r="2.5" fill="none" stroke="#111" />
          <path d="M5 0v3M5 7v3M0 5h3M7 5h3" stroke="#111" />
        </svg>
      </div>
      <div className={cy + ' w-[14px] ml-[4px]'}>
        <svg width="10" height="10" viewBox="0 0 10 10">
          <path d="M1 5h8M5 1v8M3 3h4v4H3z" stroke="#889" fill="none" strokeDasharray="1.5 1" />
        </svg>
      </div>
      <div className={cy + ' w-[14px] ml-[2px]'}>
        <svg width="8" height="10" viewBox="0 0 8 10">
          <path d="M1 0l6 5-6 5z" fill="#666" />
        </svg>
      </div>
      <div className={sel + ' w-[32px] ml-[3px] overflow-hidden'}>
        <span className="w-[20px] overflow-hidden">none</span> <ChevronDown size={8} color="#777" />
      </div>
      <div className={cy + ' w-[12px] ml-[6px] text-[#1a7a7a] font-bold'}>?</div>
      <div className="w-[13px] h-[14px] ml-[4px] bg-[#00f2f8] shrink-0" />
      <div className="flex items-center justify-between w-[23px] h-[14px] ml-[3px] bg-[#f2f2f2] border border-[#888] pl-[4px] pr-[2px] text-[#999] shrink-0">
        1
        <span className="text-[6px] leading-[6px] text-[#666]">
          ▴
          <br />▾
        </span>
      </div>
      <div className="w-[6px] h-[14px] ml-[4px] bg-white text-[#222] text-center leading-[14px] shrink-0">/</div>
      <div className="w-[26px] h-[14px] ml-[2px] bg-white text-[#222] text-center leading-[14px] shrink-0">2</div>
      <div className="w-[9px] h-[14px] ml-[1px] bg-[#e4e4e4] text-[6px] leading-[7px] text-[#333] shrink-0">
        ▴
        <br />▾
      </div>
    </div>
  );
}

function RightBars() {
  const bar = 'flex flex-col w-full bg-[#dcdcdc] rounded-l-[2px] overflow-hidden';
  const dots = <span className="h-[5px] text-[5px] leading-[3px] text-[#444] pl-[3px] tracking-[0.5px]">....</span>;
  const Hr = () => <span className="h-px bg-[#999] my-[2px] mx-[2px]" />;
  return (
    <div className="flex flex-col w-[15px] shrink-0 ml-[1px] pt-[24px]">
      <div className={bar + ' h-[169px] pl-[2px] pt-[1px]'}>
        {dots}
        <Tb name="fit" />
        <Tb name="win" />
        <Hr />
        <Tb name="cube" />
        <Tb name="cubeO" />
        <Tb name="cubeO" />
        <Tb name="cube" />
        <Tb name="axes" />
        <Hr />
        <Tb name="shot" />
        <Tb name="win" />
      </div>
      <div className={bar + ' h-[58px] mt-[44px] pl-[2px] pt-[1px]'}>
        {dots}
        <Tb name="mag" />
        <Tb name="circ" />
        <Tb name="lines" />
      </div>
      <div className={bar + ' h-[91px] mt-[14px] pl-[2px] pt-[1px]'}>
        {dots}
        <Tb name="magBox" />
        <Tb name="magBox" />
        <Tb name="magPlus" />
        <Tb name="magMinus" />
        <Tb name="magBox" />
      </div>
    </div>
  );
}

export default function App() {
  return (
    <div className="relative flex flex-col w-[1435px] h-[764px] overflow-hidden bg-[#4d4b48] text-[8.6px] font-['Roboto',sans-serif]">
      <div className="absolute left-0 top-0 z-30 flex items-center justify-center w-[33px] h-[33px] bg-[#8f8f8f] border border-[#444]">
        <svg width="26" height="27" viewBox="0 0 26 27">
          <rect x="2" y="1" width="20" height="22" rx="2" fill="#1d7fcf" stroke="#0d4f8c" />
          <text x="3.5" y="20" fontSize="22" fontWeight="700" fill="#fff" fontFamily="Liberation Sans">
            C
          </text>
          <path d="M3 25 11 22h4l-7 4z" fill="#d33" />
          <path d="M11 25l5-3h4l-5 3z" fill="#e5c92a" />
          <path d="M17 25l4-3h4l-4 3z" fill="#3aa84a" />
        </svg>
      </div>
      <TitleBar />
      <TabBar />
      <Ribbon />
      <Toolbar />
      <div className="flex flex-1 min-h-0">
        <TreeMenu />
        <div className="flex flex-col flex-1 min-w-0 ml-[4px] pt-[2px]">
          <div className="relative flex-1 ml-[2px] bg-white border border-[#b5b5b5] overflow-hidden">
            <Model />
            <NavCube />
            <SelectIdentity />
          </div>
          <ViewTabs />
          <MessageWindow />
        </div>
        <RightBars />
      </div>
      <StatusBar />
    </div>
  );
}
